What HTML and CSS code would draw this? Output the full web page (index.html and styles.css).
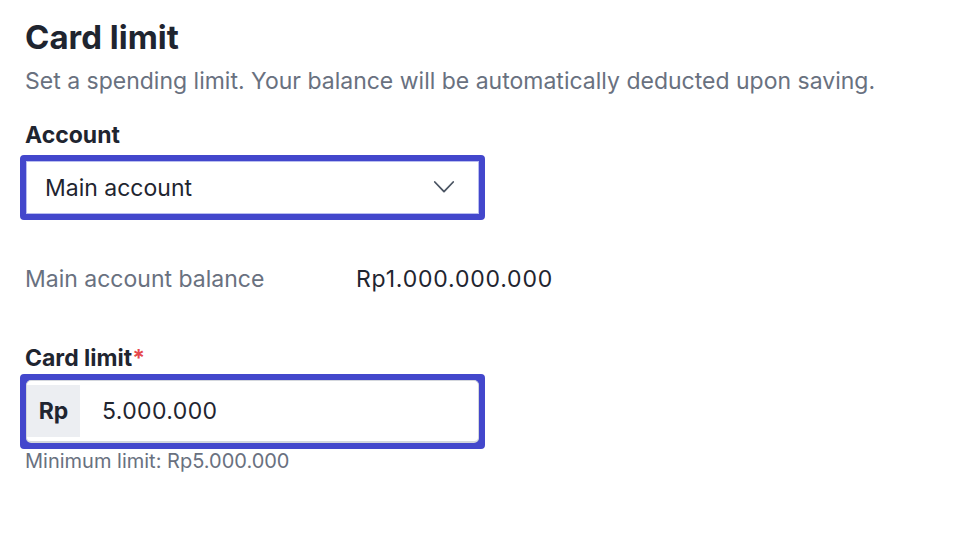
FILE: index.html
```html
<!DOCTYPE html>
<html lang="en">
<head>
<meta charset="utf-8">
<title>Card limit</title>
<link rel="stylesheet" href="styles.css">
</head>
<body>
<main class="page">
  <h1 class="title">Card limit</h1>
  <p class="subtitle">Set a spending limit. Your balance will be automatically deducted upon saving.</p>

  <div class="field">
    <label class="label label-account">Account</label>
    <div class="ring">
      <div class="select">
        <span class="select-value">Main account</span>
        <svg class="chevron" width="22" height="22" viewBox="0 0 22 22" fill="none">
          <path d="M1.8 5 L11 14.6 L20.2 5" stroke="#4b5563" stroke-width="1.8" stroke-linecap="round" stroke-linejoin="round"/>
        </svg>
      </div>
    </div>
  </div>

  <div class="balance">
    <span class="balance-label">Main account balance</span>
    <span class="balance-value">Rp1.000.000.000</span>
  </div>

  <div class="field">
    <label class="label label-limit">Card limit<span class="req">*</span></label>
    <div class="ring">
      <div class="input">
        <span class="prefix">Rp</span>
        <span class="input-value">5.000.000</span>
      </div>
    </div>
    <p class="help">Minimum limit: Rp5.000.000</p>
  </div>
</main>
</body>
</html>
```
FILE: styles.css
```css
html, body {
  margin: 0;
  padding: 0;
  background: #ffffff;
}
body {
  font-family: Inter, "Noto Sans", sans-serif;
  color: #1f2530;
}
.page {
  padding: 17px 20px 0 20px;
}
.title {
  margin: 0 0 0 5px;
  font-size: 33px;
  font-weight: 700;
  line-height: 40px;
  color: #1f2530;
}
.subtitle {
  margin: 9px 0 0 5px;
  font-size: 23px;
  line-height: 30px;
  color: #69717f;
}
.field {
  width: 465px;
}
.label {
  display: block;
  margin-left: 5px;
  font-size: 23px;
  font-weight: 700;
  line-height: 30px;
  color: #1f2530;
}
.label-account {
  margin-top: 24px;
  margin-bottom: 5px;
}
.label-limit {
  margin-top: 49px;
  margin-bottom: 1px;
}
.req {
  color: #e5484d;
}
.ring {
  border: 6px solid #4347cc;
  border-radius: 4px;
  background: #4347cc;
}
.select {
  display: flex;
  align-items: center;
  justify-content: space-between;
  height: 51px;
  padding: 0 23px 0 18px;
  background: #ffffff;
  border: 1px solid #b9bdf0;
}
.select-value {
  font-size: 23px;
  color: #1f2530;
}
.chevron {
  display: block;
}
.balance {
  display: flex;
  align-items: center;
  margin: 44px 0 0 5px;
  font-size: 23px;
  line-height: 30px;
}
.balance-label {
  width: 331px;
  color: #69717f;
}
.balance-value {
  color: #1f2530;
  letter-spacing: 0.8px;
}
.input {
  display: flex;
  align-items: stretch;
  height: 63px;
  box-sizing: border-box;
  background: #ffffff;
  border: 1px solid #d4d7dd;
  border-bottom-width: 2px;
  border-radius: 5px;
  padding: 4px 0 4px 0;
}
.prefix {
  display: flex;
  align-items: center;
  justify-content: center;
  width: 53px;
  background: #eceef2;
  font-size: 23px;
  font-weight: 700;
  color: #1f2530;
}
.input-value {
  display: flex;
  align-items: center;
  padding-left: 22px;
  font-size: 23px;
  color: #1f2530;
  letter-spacing: 0.4px;
}
.help {
  margin: 0 0 0 5px;
  font-size: 20px;
  line-height: 24px;
  color: #69717f;
}
```
